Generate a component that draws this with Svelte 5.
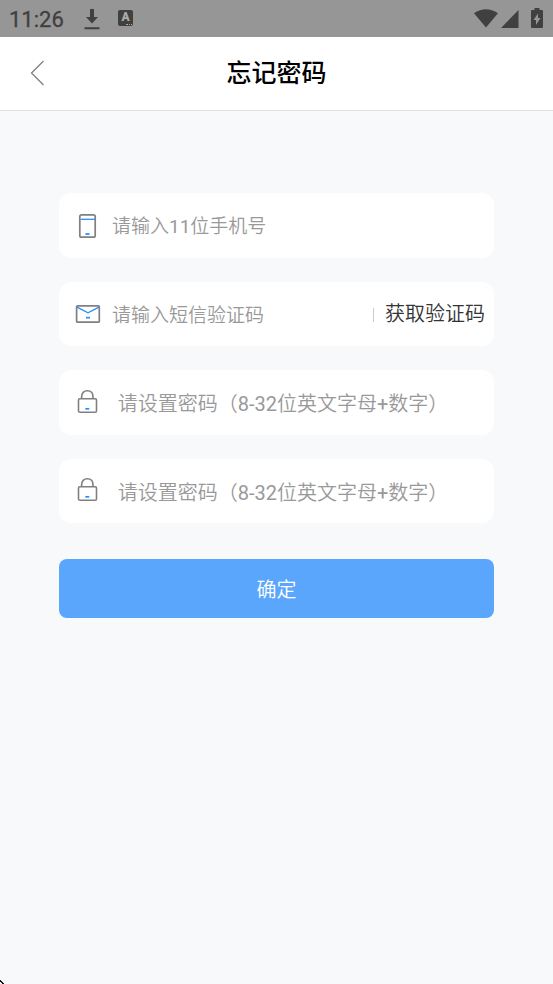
<script>
  const fields = [
    { icon: 'phone', hint: '请输入11位手机号' },
    { icon: 'mail', hint: '请输入短信验证码', action: '获取验证码' },
    { icon: 'lock', hint: '请设置密码（8-32位英文字母+数字）', wide: true },
    { icon: 'lock', hint: '请设置密码（8-32位英文字母+数字）', wide: true }
  ];
</script>

<div class="screen">
  <div class="status">
    <span class="time">11:26</span>
    <svg class="download" width="16" height="22" viewBox="0 0 16 22"><path d="M6 0h4v8h4l-6 6.500-6-6.500h4zM.5 18.300h15v2H.5z" fill="#404040" /></svg>
    <span class="badge"><b>A</b><i></i></span>
    <svg class="wifi" width="24" height="20" viewBox="0 0 24 20"><path d="M0 4.200Q12-3.500 24 4.200L12 18.500z" fill="#404040" /></svg>
    <svg class="signal" width="18" height="18" viewBox="0 0 18 18"><path d="M17.500 0v18H0z" fill="#404040" /></svg>
    <svg class="battery" width="12" height="20" viewBox="0 0 12 20"><path d="M3.500 0h5v2H11q1 0 1 1v16q0 1-1 1H1q-1 0-1-1V3q0-1 1-1h2.500z" fill="#404040" /><path d="M7 5.500v4.500h2.500L5 17v-5H2.500z" fill="#969696" /></svg>
  </div>

  <header>
    <svg class="back" width="15" height="26" viewBox="0 0 15 26"><path d="M13.500 1L1.500 13l12 12" fill="none" stroke="#808080" stroke-width="1.300" /></svg>
    <h1>忘记密码</h1>
  </header>

  <main>
    {#each fields as field}
      <div class="field">
        <span class="icon">
          {#if field.icon === 'phone'}
            <svg class="phone" width="28" height="28" viewBox="0 0 28 28" fill="none"><path d="M6.500 7.300h15" stroke="#2590ff" stroke-width="1.300" /><rect x="5.800" y="2.800" width="15.400" height="22.400" rx="1.800" stroke="#808080" stroke-width="1.700" /><path d="M11.500 22h4" stroke="#2590ff" stroke-width="1.800" /></svg>
          {:else if field.icon === 'mail'}
            <svg width="28" height="28" viewBox="0 0 28 28" fill="none"><rect x="2.600" y="5.800" width="22.700" height="16.400" rx="1" stroke="#808080" stroke-width="1.700" /><path d="M3 7.200l11 5.600 11-5.600" stroke="#2590ff" stroke-width="1.400" /><path d="M12 17.700h4" stroke="#2590ff" stroke-width="1.700" /></svg>
          {:else}
            <svg class="lock" width="28" height="28" viewBox="0 0 28 28" fill="none"><path d="M7.600 10.500V9C7.600 5 10 2.800 13.300 2.800S19 5 19 9v1.500" stroke="#808080" stroke-width="1.600" /><rect x="4.500" y="10.700" width="18" height="13.500" rx="1.300" stroke="#808080" stroke-width="1.600" /><path d="M11.300 20.800h4" stroke="#2590ff" stroke-width="1.700" /></svg>
          {/if}
        </span>
        <span class="hint" class:wide={field.wide}>{field.hint}</span>
        {#if field.action}
          <span class="action">{field.action}</span>
        {/if}
      </div>
    {/each}
    <button>确定</button>
  </main>
  <svg class="corner" width="4" height="4" viewBox="0 0 4 4"><path d="M0 0h1v1h1v1h1v1h1v1H2V3H1V2H0z" fill="#111" /></svg>
</div>

<style>
  .screen {
    position: relative;
    height: 984px;
    overflow: hidden;
    background: #f8f9fb;
    font-family: Roboto, "Noto Sans CJK SC DemiLight", "Noto Sans CJK SC", sans-serif;
  }
  .status {
    display: flex;
    align-items: center;
    height: 37px;
    box-sizing: border-box;
    padding: 0 10px 0 9px;
    background: #969696;
    color: #404040;
  }
  .time {
    width: 74px;
    padding-top: 2px;
    font-size: 22px;
    line-height: 26px;
    font-weight: 400;
    letter-spacing: 0;
    -webkit-text-stroke: 0.300px #404040;
  }
  .download {
    margin: 2px 18px 0 1px;
  }
  .badge {
    position: relative;
    width: 15px;
    height: 16px;
    border-radius: 2px;
    background: #404040;
    color: #aaa;
    text-align: center;
    font-size: 12px;
    line-height: 15px;
    margin-top: -1px;
  }
  .badge b {
    display: block;
    font-weight: 900;
  }
  .badge i {
    position: absolute;
    right: 1px;
    bottom: 1px;
    width: 6px;
    border-bottom: 1px dotted #aaa;
  }
  .wifi {
    margin: 0 4px 0 auto;
  }
  .signal {
    margin-left: -1px;
  }
  .battery {
    margin: -2px 0 0 12px;
  }
  header {
    display: flex;
    align-items: center;
    height: 74px;
    box-sizing: border-box;
    border-bottom: 1px solid #dedfe1;
    background: #fff;
  }
  .back {
    margin: -1px 0 0 30px;
  }
  h1 {
    flex: 1;
    margin: 0 45px 0 0;
    color: #000;
    text-align: center;
    font-family: Roboto, "Noto Sans CJK SC", sans-serif;
    font-size: 25px;
    line-height: 36px;
    font-weight: 500;
  }
  main {
    display: flex;
    flex-direction: column;
    gap: 24px;
    padding: 82px 59px 0;
  }
  .field {
    display: flex;
    align-items: center;
    height: 64.500px;
    box-sizing: border-box;
    padding: 0 9px 0 15px;
    border-radius: 12px;
    background: #fff;
  }
  .icon {
    width: 28px;
    height: 28px;
    margin-right: 10px;
  }
  .phone {
    margin-top: 0.500px;
  }
  .lock {
    margin: -0.300px 0 0 -0.500px;
  }
  .hint {
    margin-top: 4px;
    color: #999;
    white-space: nowrap;
    font-size: 19px;
    line-height: 28px;
  }
  .wide {
    margin: 3.500px 0 0 5.700px;
    font-size: 20px;
  }
  .action {
    display: flex;
    align-items: center;
    margin: 0 0 0 auto;
    color: #333;
    font-size: 20px;
    line-height: 28px;
  }
  .action::before {
    content: "";
    height: 14px;
    margin: 2px 11px 0 0;
    border-left: 1px solid #ccc;
  }
  button {
    height: 59px;
    margin-top: 12px;
    padding: 2px 0 0;
    border: 0;
    border-radius: 8px;
    background: #5aa6fc;
    color: #fff;
    font-family: inherit;
    font-size: 20px;
    line-height: 28px;
  }
  .corner {
    position: absolute;
    left: 0;
    bottom: 0;
  }
</style>
